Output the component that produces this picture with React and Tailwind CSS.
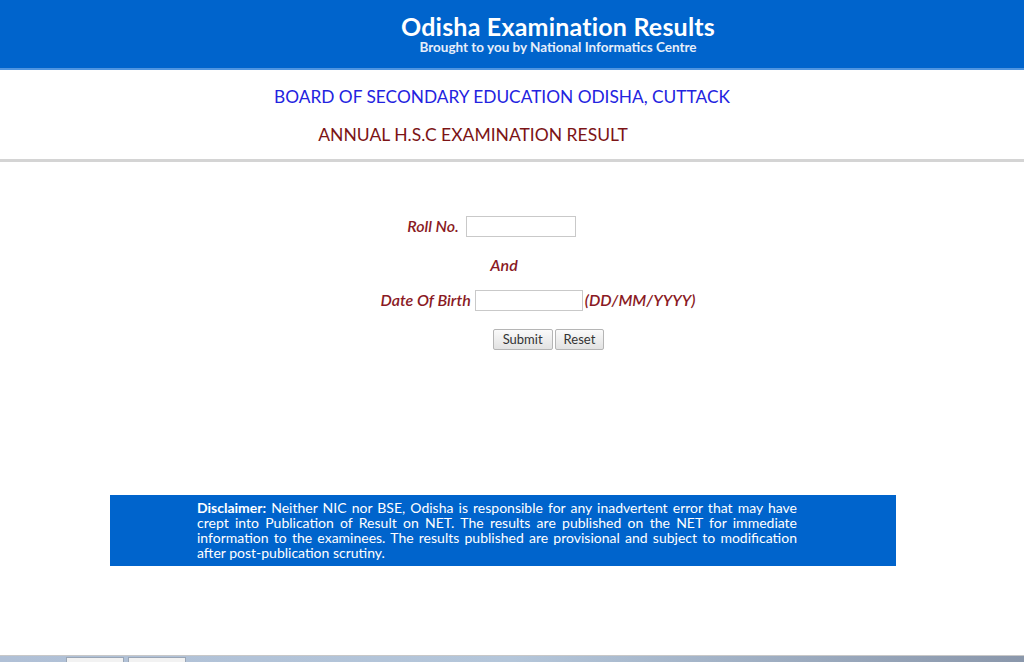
export default function App() {
  return (
    <div className="w-[1024px] h-[662px] bg-white flex flex-col overflow-hidden font-['Lato',sans-serif]">
      <header className="h-[70px] bg-[#0064cc] border-b-2 border-[#4f95e0] flex flex-col items-center justify-center text-white">
        <h1 className="text-[25px] font-bold leading-[28px] ml-[92px] tracking-[0.2px] -mt-[2px]">Odisha Examination Results</h1>
        <p className="text-[13.5px] font-bold leading-[15px] ml-[92px] text-[#e6eefa]">Brought to you by National Informatics Centre</p>
      </header>

      <div className="h-[92px] flex flex-col items-center border-b-[3px] border-[#d4d4d4]">
        <h2 className="mt-[16px] text-[17.3px] leading-[22px] text-[#2323e0] -ml-[20px]">BOARD OF SECONDARY EDUCATION ODISHA, CUTTACK</h2>
        <h3 className="mt-[16px] text-[17.5px] leading-[22px] text-[#7c1416] -ml-[78px]">ANNUAL H.S.C EXAMINATION RESULT</h3>
      </div>

      <form className="flex flex-col items-center text-[#8a1a24] italic font-semibold text-[16px] mt-[52px]" onSubmit={(e) => e.preventDefault()}>
        <div className="flex items-center gap-[7px] -ml-[41px]">
          <label>Roll No.</label>
          <input className="w-[110px] h-[21px] border border-[#c9c9c9] bg-white" />
        </div>
        <div className="mt-[15px] -ml-[16px]">And</div>
        <div className="mt-[11px] flex items-center gap-[4px] ml-[52px]">
          <label>Date Of Birth</label>
          <input className="w-[108px] h-[21px] border border-[#c9c9c9] bg-white" />
          <span className="-ml-[2px]">(DD/MM/YYYY)</span>
        </div>
        <div className="mt-[17px] flex gap-[2px] not-italic font-normal text-[13px] text-[#333] ml-[73px]">
          <button type="submit" className="h-[21px] px-[9px] border border-[#b5b5b5] rounded-[2px] bg-gradient-to-b from-[#fafafa] to-[#e2e2e2]">Submit</button>
          <button type="reset" className="h-[21px] px-[8px] border border-[#b5b5b5] rounded-[2px] bg-gradient-to-b from-[#fafafa] to-[#e2e2e2]">Reset</button>
        </div>
      </form>

      <div className="mt-[145px] mx-[110px] w-[786px] h-[71px] bg-[#0064cc] flex items-center justify-center">
        <p className="w-[600px] mr-[12px] text-white text-[14px] leading-[15px] text-justify mb-[2px]">
          <b>Disclaimer:</b> Neither NIC nor BSE, Odisha is responsible for any inadvertent error that may have crept into Publication of Result on NET. The results are published on the NET for immediate information to the examinees. The results published are provisional and subject to modification after post-publication scrutiny.
        </p>
      </div>

      <div className="mt-auto h-[7px] bg-gradient-to-r from-[#b0c0d6] via-[#b4c6da] to-[#8a97ab] border-t border-[#c8c8c8] flex items-end gap-[4px] pl-[66px]">
        <div className="w-[58px] h-[5px] bg-[#f2f2f2] border border-b-0 border-[#9aa6b6]" />
        <div className="w-[58px] h-[5px] bg-[#f2f2f2] border border-b-0 border-[#9aa6b6]" />
      </div>
    </div>
  );
}
